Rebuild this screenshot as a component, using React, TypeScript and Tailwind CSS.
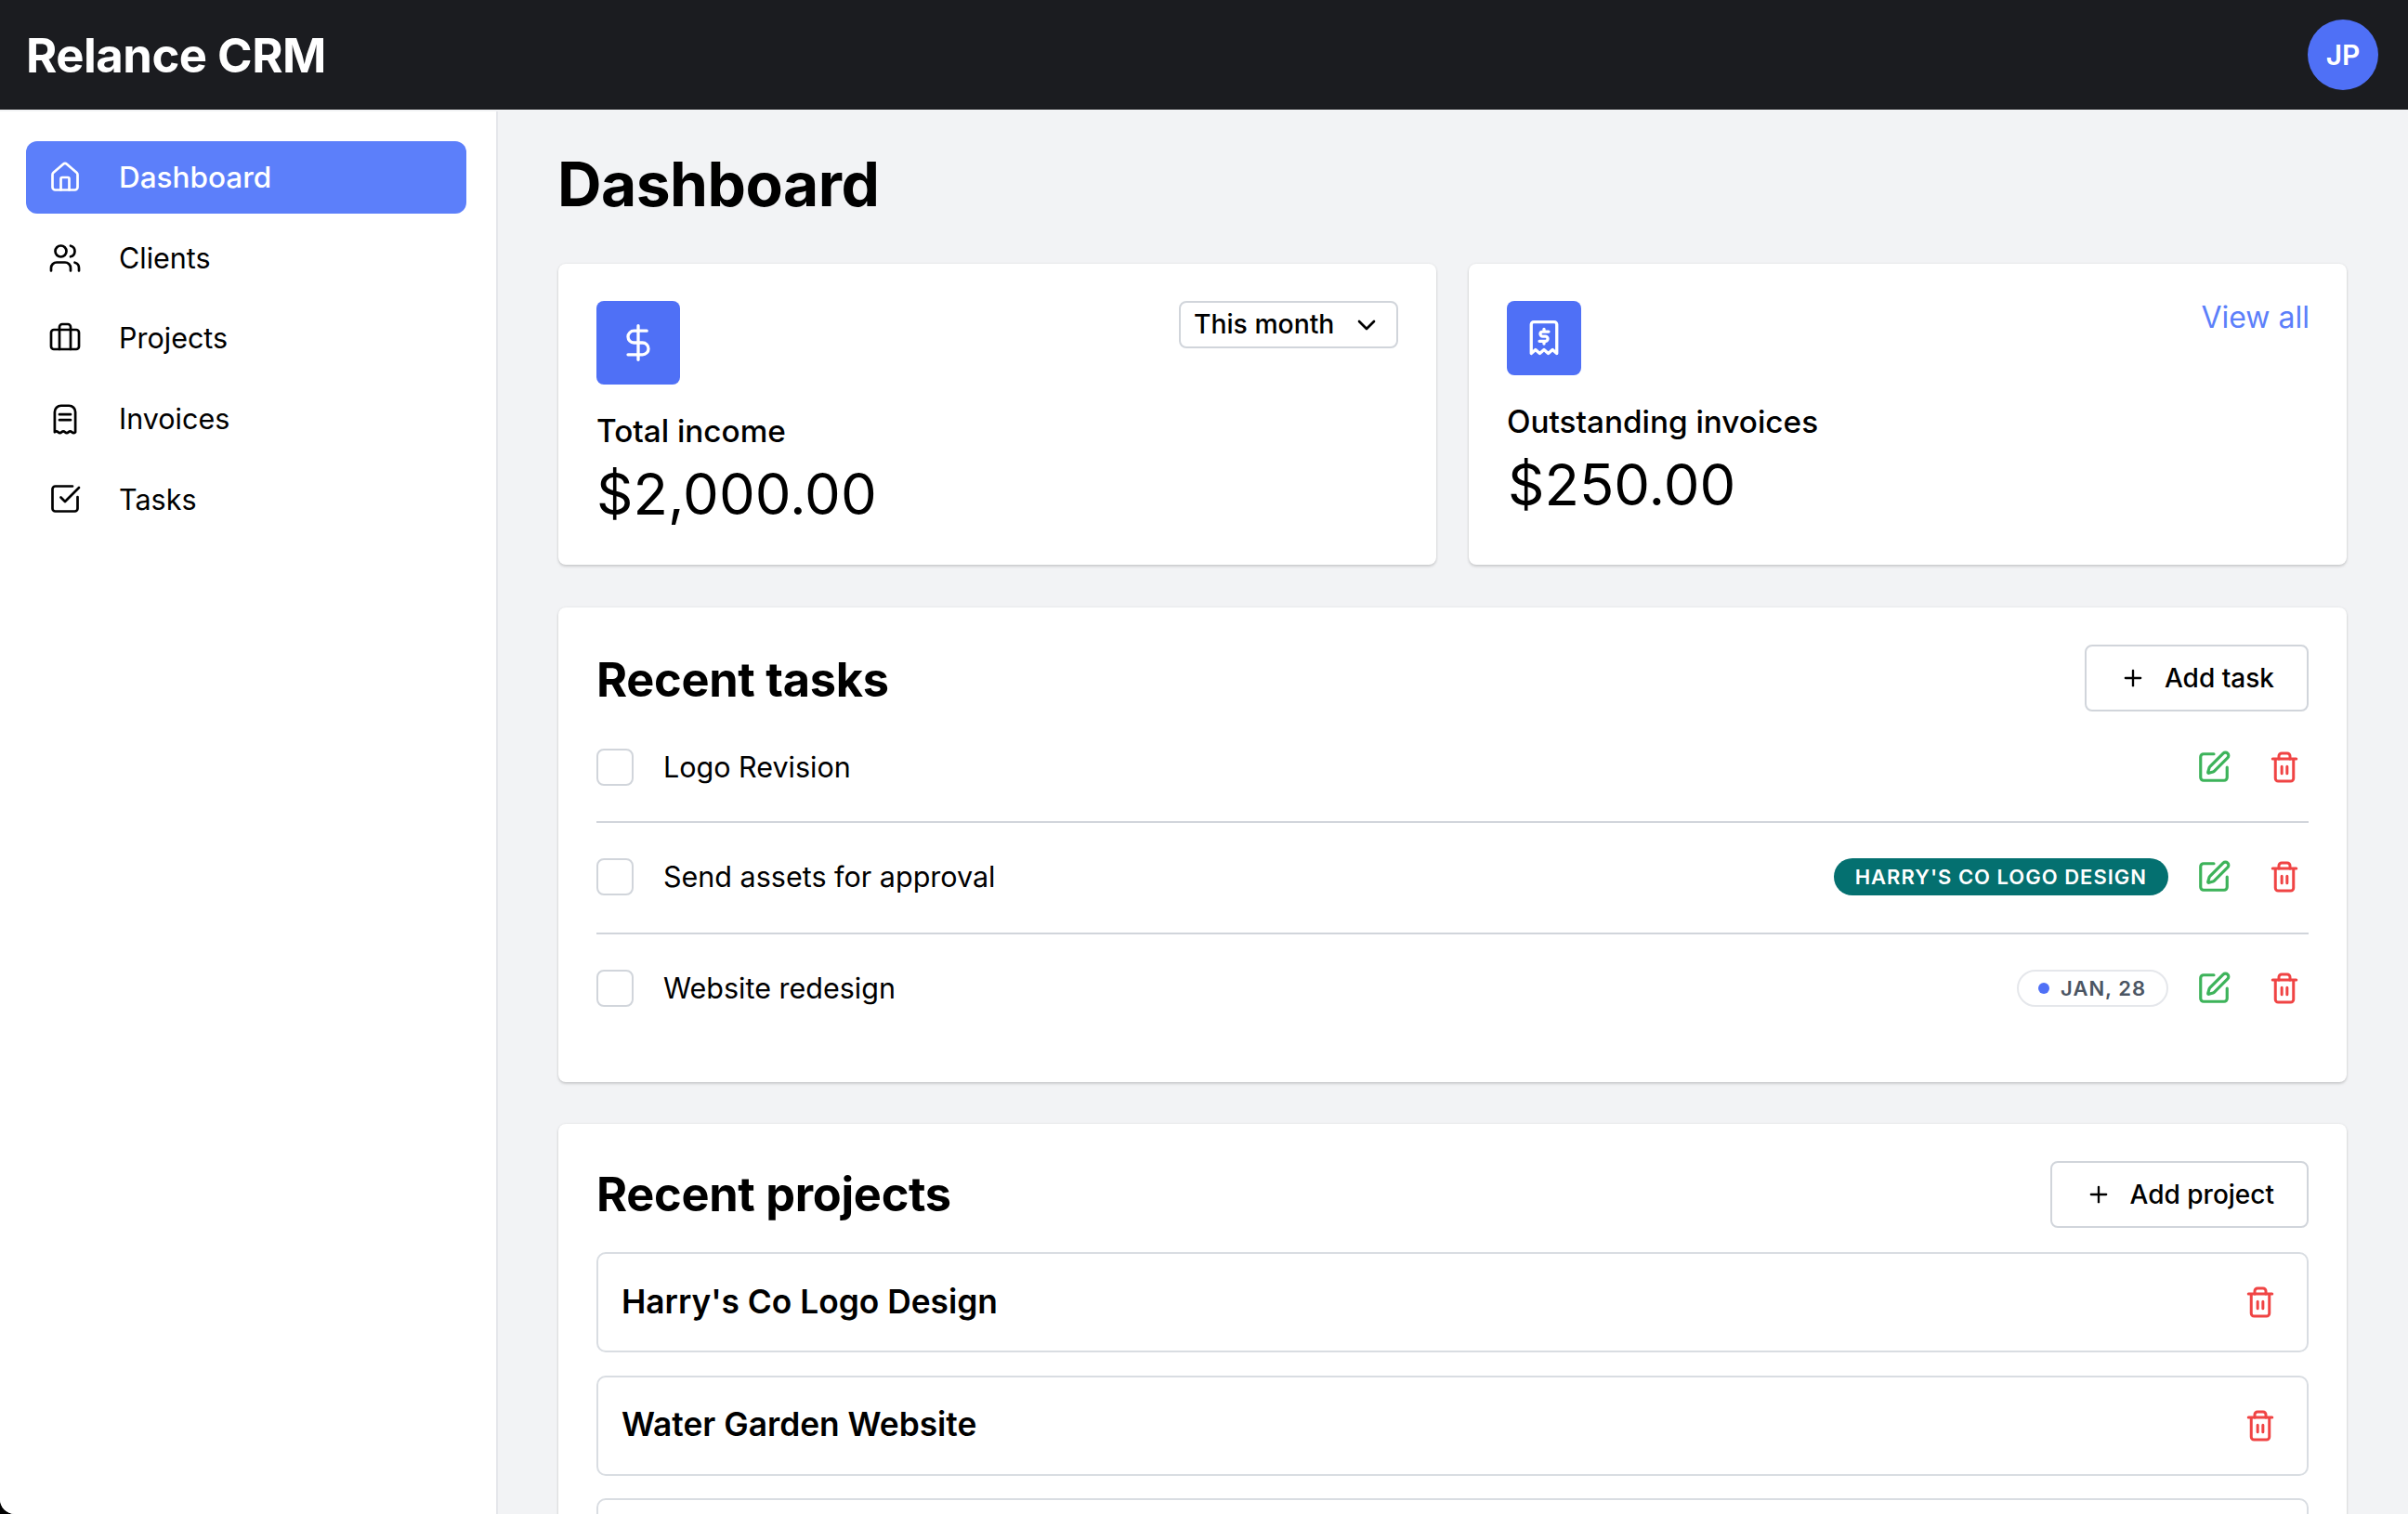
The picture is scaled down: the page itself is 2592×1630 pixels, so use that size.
import { Briefcase, ChevronDown, DollarSign, House, Plus, SquareCheckBig, SquarePen, Users } from "lucide-react"
import type { ReactNode } from "react"

function ReceiptLines({ className, strokeWidth = 1.8 }: { className?: string; strokeWidth?: number }) {
  return (
    <svg viewBox="0 0 24 24" fill="none" stroke="currentColor" strokeWidth={strokeWidth} strokeLinecap="round" strokeLinejoin="round" className={className}>
      <path d="M4.6 21.5V7a4.5 4.5 0 0 1 4.5-4.5h5.8A4.5 4.5 0 0 1 19.4 7v14.5q-1.23 1.2-2.47 0t-2.47 0-2.46 0-2.47 0-2.47 0-2.46 0" />
      <path d="M8 8.8h8M8 12.8h8" />
    </svg>
  )
}

function ReceiptDollar({ className }: { className?: string }) {
  return (
    <svg viewBox="0 0 24 24" fill="none" stroke="currentColor" strokeWidth="1.8" strokeLinecap="round" strokeLinejoin="round" className={className}>
      <path d="M4.5 21V4a1.5 1.5 0 0 1 1.5-1.5h12A1.5 1.5 0 0 1 19.5 4v17L17 18.8 14.5 21 12 18.8 9.5 21 7 18.8z" />
      <path d="M14.7 8.2h-3.5a1.4 1.4 0 0 0 0 2.8h1.6a1.4 1.4 0 0 1 0 2.8H9.3M12 6.7v1.5M12 13.8v1.5" />
    </svg>
  )
}

function Trash({ className }: { className?: string }) {
  return (
    <svg viewBox="0 0 24 24" fill="none" stroke="currentColor" strokeWidth="2" strokeLinecap="round" strokeLinejoin="round" className={className}>
      <path d="M3.5 6h17M5.5 6v14a2 2 0 0 0 2 2h9a2 2 0 0 0 2-2V6" />
      <path d="M8 6V4a2 2 0 0 1 2-2h4a2 2 0 0 1 2 2v2M10.1 11.5v5M13.9 11.5v5" />
    </svg>
  )
}

const navItems = [
  { label: "Dashboard", icon: House, active: true },
  { label: "Clients", icon: Users },
  { label: "Projects", icon: Briefcase },
  { label: "Invoices", icon: ReceiptLines },
  { label: "Tasks", icon: SquareCheckBig },
]

function TaskRow({ title, first, last, children }: { title: string; first?: boolean; last?: boolean; children?: ReactNode }) {
  return (
    <div className={`flex items-center ${first ? "pt-[40px] pb-[38px] border-b-2 border-[#d1d5db]" : last ? "pt-[38px] pb-[81px]" : "pt-[38px] pb-[40px] border-b-2 border-[#d1d5db]"}`}>
      <span className="w-[40px] h-[40px] rounded-[8px] border-2 border-[#d1d5db] bg-white shrink-0" />
      <span className="ml-[32px] text-[30.5px] leading-[40px] text-black">{title}</span>
      <div className="ml-auto flex items-center">
        {children}
        <SquarePen className="ml-[30px] w-[38px] h-[38px] text-[#3db35a]" strokeWidth={2} />
        <Trash className="ml-[39px] mr-[8px] w-[36px] h-[36px] text-[#f04444]" />
      </div>
    </div>
  )
}

function ProjectRow({ name }: { name: string }) {
  return (
    <div className="flex items-center justify-between h-[108px] pl-[25px] pr-[26px] border-2 border-[#d9dde2] rounded-[10px] mb-[24.5px]">
      <span className="text-[35.3px] font-semibold text-black">{name}</span>
      <Trash className="mr-[6px] w-[36px] h-[36px] text-[#f04444]" />
    </div>
  )
}

function AddButton({ label }: { label: string }) {
  return (
    <button className="flex items-center h-[72px] pl-[36px] pr-[35px] border-2 border-[#d1d5db] rounded-[8px] bg-white text-[28px] font-medium text-black">
      <Plus className="w-[28px] h-[28px] mr-[20px]" strokeWidth={2} />
      {label}
    </button>
  )
}

const cardClass = "h-[324px] px-[41px] py-[40px] bg-white rounded-[8px] shadow-[0_2px_3px_rgba(0,0,0,0.15),0_0_3px_rgba(0,0,0,0.08)]"

export default function App() {
  return (
    <div className="h-[1630px] overflow-hidden bg-black" style={{ fontFamily: "Inter, sans-serif" }}>
      <div className="h-full flex flex-col overflow-hidden rounded-bl-[16px] bg-[#f2f3f5]">
        <header className="h-[118px] shrink-0 flex items-center justify-between pl-[28px] pr-[32px] bg-[#1b1c20]">
          <span className="pt-[2px] text-[50.8px] font-bold tracking-[-0.5px] text-white">Relance CRM</span>
          <span className="w-[76px] h-[76px] rounded-full bg-[#4f70f6] flex items-center justify-center text-[30px] font-semibold text-white">JP</span>
        </header>
        <div className="flex flex-1 min-h-0">
          <aside className="w-[536px] shrink-0 mt-[2px] pt-[32px] pl-[28px] pr-[32px] bg-white border-r-2 border-[#e5e7eb]">
            <nav className="flex flex-col gap-[8.6px]">
              {navItems.map((item) => {
                const Icon = item.icon
                return (
                  <a key={item.label} className={`flex items-center h-[78px] pl-[24px] rounded-[12px] ${item.active ? "bg-[#5c7ffa] text-white font-medium text-[31.5px]" : "text-black text-[30.5px]"}`}>
                    <Icon className="w-[36px] h-[36px] shrink-0" strokeWidth={1.8} />
                    <span className="ml-[40px]">{item.label}</span>
                  </a>
                )
              })}
            </nav>
          </aside>
          <main className="flex-1 min-w-0 pl-[65px] pr-[66px] pt-[40px]">
            <h1 className="-ml-[1px] text-[65.8px] leading-[80px] font-bold tracking-[-0.5px] text-black">Dashboard</h1>
            <div className="mt-[46px] grid grid-cols-2 gap-[35px]">
              <section className={cardClass}>
                <div className="flex items-start justify-between">
                  <span className="w-[90px] h-[90px] rounded-[8px] bg-[#4f70f6] flex items-center justify-center text-white">
                    <DollarSign className="w-[44px] h-[44px]" strokeWidth={1.8} />
                  </span>
                  <button className="flex items-center w-[236px] h-[51px] pl-[14px] border-2 border-[#d1d5db] rounded-[8px] text-[28.3px] font-medium text-black">
                    This month
                    <ChevronDown className="ml-[19px] w-[32px] h-[32px]" strokeWidth={2} />
                  </button>
                </div>
                <p className="mt-[30px] text-[33.3px] leading-[40px] font-medium text-black">Total income</p>
                <p className="mt-[8px] text-[61.5px] leading-[80px] text-black">$2,000.00</p>
              </section>
              <section className={cardClass}>
                <div className="flex items-start justify-between">
                  <span className="w-[80px] h-[80px] rounded-[8px] bg-[#4f70f6] flex items-center justify-center text-white">
                    <ReceiptDollar className="w-[44px] h-[44px]" />
                  </span>
                  <a className="-mr-[1px] text-[32px] leading-[36px] text-[#5c7ffa]">View all</a>
                </div>
                <p className="mt-[30px] text-[33.3px] leading-[40px] font-medium text-black">Outstanding invoices</p>
                <p className="mt-[8px] ml-[1px] text-[61.5px] leading-[80px] text-black">$250.00</p>
              </section>
            </div>
            <section className="mt-[46px] h-[511px] px-[41px] pt-[40px] bg-white rounded-[8px] shadow-[0_2px_3px_rgba(0,0,0,0.15),0_0_3px_rgba(0,0,0,0.08)]">
              <div className="flex items-center justify-between">
                <h2 className="pt-[4px] text-[50.5px] leading-[68px] font-bold tracking-[-0.3px] text-black">Recent tasks</h2>
                <AddButton label="Add task" />
              </div>
              <TaskRow title="Logo Revision" first />
              <TaskRow title="Send assets for approval">
                <span className="h-[40px] px-[23px] flex items-center rounded-full bg-[#047070] text-[22px] font-semibold tracking-[1px] text-white">HARRY'S CO LOGO DESIGN</span>
              </TaskRow>
              <TaskRow title="Website redesign" last>
                <span className="h-[40px] pl-[21px] pr-[22px] flex items-center rounded-full border-2 border-[#e5e7eb] text-[22px] font-semibold tracking-[1px] text-[#4b5563]">
                  <span className="w-[12px] h-[12px] rounded-full bg-[#4f70f6] mr-[12px]" />
                  JAN, 28
                </span>
              </TaskRow>
            </section>
            <section className="mt-[45px] px-[41px] pt-[40px] pb-[40px] bg-white rounded-[8px] shadow-[0_2px_3px_rgba(0,0,0,0.15),0_0_3px_rgba(0,0,0,0.08)]">
              <div className="flex items-center justify-between mb-[26px]">
                <h2 className="text-[50.5px] leading-[72px] font-bold tracking-[-0.3px] text-black">Recent projects</h2>
                <AddButton label="Add project" />
              </div>
              <ProjectRow name="Harry's Co Logo Design" />
              <ProjectRow name="Water Garden Website" />
              <ProjectRow name="" />
            </section>
          </main>
        </div>
      </div>
    </div>
  )
}
